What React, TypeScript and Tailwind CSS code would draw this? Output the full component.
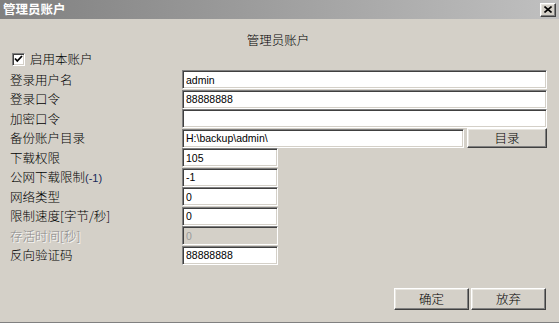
import React from "react";

const cjk = "font-['Noto_Sans_CJK_SC','Noto_Sans',sans-serif]";
const latin = "font-['Liberation_Sans','Noto_Sans_CJK_SC',sans-serif]";

const sunken =
  "border border-t-[#808080] border-l-[#808080] border-r-white border-b-white shadow-[inset_1px_1px_0_#404040,inset_-1px_-1px_0_#d4d0c8]";
const raised =
  "border border-t-white border-l-white border-r-[#404040] border-b-[#404040] shadow-[inset_-1px_-1px_0_#808080,inset_1px_1px_0_#e8e6e0] bg-[#d4d0c8]";

type Row = {
  label: React.ReactNode;
  value: string;
  width: "wide" | "dir" | "narrow";
  disabled?: boolean;
};

const rows: Row[] = [
  { label: "登录用户名", value: "admin", width: "wide" },
  { label: "登录口令", value: "88888888", width: "wide" },
  { label: "加密口令", value: "", width: "wide" },
  { label: "备份账户目录", value: "H:\\backup\\admin\\", width: "dir" },
  { label: "下载权限", value: "105", width: "narrow" },
  {
    label: (
      <>
        公网下载限制<span className={`${latin} text-[11px] font-normal text-[#1a2a5a]`}>(-1)</span>
      </>
    ),
    value: "-1",
    width: "narrow",
  },
  { label: "网络类型", value: "0", width: "narrow" },
  { label: "限制速度[字节/秒]", value: "0", width: "narrow" },
  { label: "存活时间[秒]", value: "0", width: "narrow", disabled: true },
  { label: "反向验证码", value: "88888888", width: "narrow" },
];

function Field({ row }: { row: Row }) {
  const w =
    row.width === "wide" ? "w-[365px]" : row.width === "dir" ? "w-[282px]" : "w-[96px]";
  return (
    <input
      readOnly
      disabled={row.disabled}
      value={row.value}
      className={`${sunken} ${w} h-[19px] px-[3px] ${latin} text-[10.5px] font-normal outline-none ${
        row.disabled ? "bg-[#d4d0c8] text-[#9a9a9a]" : "bg-white text-black"
      }`}
    />
  );
}

export default function App() {
  return (
    <div
      className={`w-[559px] h-[323px] bg-[#d4d0c8] flex flex-col border-b border-[#808080] overflow-hidden ${cjk} font-light text-[12.5px] text-black`}
    >
      {/* title bar */}
      <div className="h-[19px] flex items-center justify-between pl-[3px] pr-[3px] bg-gradient-to-r from-[#808080] to-[#c0c0c0]">
        <span className="text-white font-bold text-[12.5px] leading-none">管理员账户</span>
        <button className={`${raised} w-[16px] h-[14px] flex items-center justify-center`}>
          <svg width="8" height="7" viewBox="0 0 8 7">
            <path d="M0.5 0.5 L7.5 6.5 M7.5 0.5 L0.5 6.5" stroke="black" strokeWidth="1.6" />
          </svg>
        </button>
      </div>

      <div className="mt-[14px] h-[14px] leading-[14px] text-center pr-[3px]">管理员账户</div>

      {/* enable checkbox */}
      <div className="mt-[5px] h-[14px] flex items-center pl-[12px] gap-[5px]">
        <div className={`${sunken} w-[13px] h-[13px] bg-white flex items-center justify-center`}>
          <svg width="9" height="8" viewBox="0 0 9 8">
            <path d="M1 3.5 L3.3 6 L8 1" stroke="black" strokeWidth="1.8" fill="none" />
          </svg>
        </div>
        <span>启用本账户</span>
      </div>

      {/* form rows */}
      <div className="mt-[4px] flex flex-col">
        {rows.map((row, i) => (
          <div key={i} className="h-[19.5px] flex items-center">
            <div
              className={`w-[182px] pl-[10px] leading-none ${
                row.disabled ? "text-[#8a8a8a] [text-shadow:1px_1px_0_#ffffff]" : ""
              }`}
            >
              {row.label}
            </div>
            <Field row={row} />
            {row.width === "dir" && (
              <button className={`${raised} ml-[3px] w-[80px] h-[20px] flex items-center justify-center`}>
                目录
              </button>
            )}
          </div>
        ))}
      </div>

      {/* footer buttons */}
      <div className="mt-[23px] flex justify-end pr-[13px] gap-[2px]">
        <button className={`${raised} w-[75px] h-[22px] flex items-center justify-center`}>确定</button>
        <button className={`${raised} w-[75px] h-[22px] flex items-center justify-center`}>放弃</button>
      </div>
    </div>
  );
}
